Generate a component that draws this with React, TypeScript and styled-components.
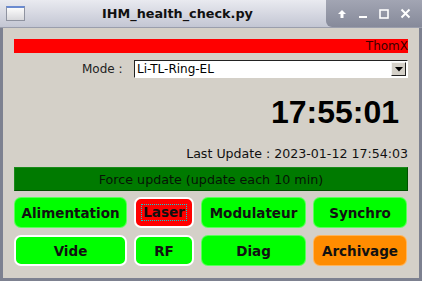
import React from 'react';
import styled, { createGlobalStyle } from 'styled-components';

const GlobalStyle = createGlobalStyle`
  html, body {
    margin: 0;
    padding: 0;
    background: #d4d0c8;
  }
`;

const Window = styled.div`
  width: 422px;
  height: 281px;
  display: flex;
  flex-direction: column;
  font-family: 'DejaVu Sans', sans-serif;
  overflow: hidden;
`;

const TitleBar = styled.div`
  height: 28px;
  display: flex;
  align-items: center;
  background: linear-gradient(#e9eaf0, #c3c6d3);
  border-bottom: 1px solid #9a9eac;
  box-sizing: border-box;
`;

const AppIcon = styled.div`
  width: 19px;
  height: 15px;
  margin-left: 6px;
  border: 1px solid #8f93a0;
  border-top: 2px solid #6a8ad0;
  background: linear-gradient(#fbfbfb, #d8d8dc);
  box-sizing: border-box;
`;

const Title = styled.div`
  flex: 1;
  text-align: center;
  font-weight: bold;
  font-size: 12.8px;
  color: #111;
  padding-left: 4px;
`;

const Controls = styled.div`
  width: 96px;
  height: 27px;
  display: flex;
  align-items: center;
  justify-content: space-around;
  padding: 0 6px;
  box-sizing: border-box;
  background: linear-gradient(#a2a5b3, #868a9a);
  border-bottom-left-radius: 6px;
  align-self: flex-start;
  color: #fff;
`;

const Body = styled.div`
  flex: 1;
  display: flex;
  flex-direction: column;
  padding: 11px 11px 0 11px;
  border: 3px solid #7d8190;
  border-top: none;
  background: #d4d0c8;
`;

const Banner = styled.div`
  height: 14px;
  background: #ff0000;
  color: #3a0000;
  font-size: 12px;
  line-height: 14px;
  text-align: right;
`;

const ModeRow = styled.div`
  display: flex;
  align-items: center;
  margin-top: 7px;
  height: 18px;
`;

const Label = styled.span`
  font-size: 12px;
  color: #222;
  margin-left: 68px;
  width: 52px;
`;

const Combo = styled.div`
  flex: 1;
  height: 18px;
  box-sizing: border-box;
  display: flex;
  align-items: center;
  background: #fff;
  border: 1px solid #fff;
  border-top-color: #222;
  border-left-color: #222;
  font-size: 12px;
  color: #000;
  padding-left: 2px;
`;

const ComboText = styled.span`
  flex: 1;
`;

const ComboArrow = styled.div`
  width: 15px;
  height: 14px;
  margin-right: 1px;
  box-sizing: border-box;
  background: #d4d0c8;
  border: 1px solid #222;
  border-top-color: #f4f4f4;
  border-left-color: #f4f4f4;
  display: flex;
  align-items: center;
  justify-content: center;
`;

const Clock = styled.div`
  font-family: 'Liberation Sans', Arial, sans-serif;
  font-weight: bold;
  font-size: 32px;
  color: #000;
  text-align: right;
  padding-right: 9px;
  margin-top: 16px;
  line-height: 36px;
`;

const LastUpdate = styled.div`
  font-size: 12.6px;
  color: #111;
  text-align: right;
  margin-top: 17px;
  line-height: 14px;
`;

const ForceBar = styled.div`
  margin-top: 6px;
  height: 24px;
  box-sizing: border-box;
  background: #007a00;
  border: 1px solid #005000;
  border-top-color: #1a8a1a;
  border-left-color: #1a8a1a;
  font-size: 12.7px;
  color: #061406;
  display: flex;
  align-items: center;
  justify-content: center;
`;

const Grid = styled.div`
  display: grid;
  grid-template-columns: 113px 60px 105px 94px;
  column-gap: 7px;
  row-gap: 7px;
  margin-top: 6px;
`;

const StatusButton = styled.div<{ $color: string; $ring?: boolean }>`
  height: 31px;
  box-sizing: border-box;
  border-radius: 7px;
  background: ${(p) => p.$color};
  border: ${(p) => (p.$ring ? '2px solid #ffffff' : '1px solid rgba(255,255,255,0.35)')};
  display: flex;
  align-items: center;
  justify-content: center;
  font-weight: bold;
  font-size: 13.5px;
  color: #111;
`;

const Focus = styled.span`
  outline: 1px dotted #00d8d8;
  padding: 0 1px;
  line-height: 15px;
`;

const buttons = [
  { label: 'Alimentation', color: '#00ff00' },
  { label: 'Laser', color: '#ff0000', ring: true, focus: true },
  { label: 'Modulateur', color: '#00ff00' },
  { label: 'Synchro', color: '#00ff00' },
  { label: 'Vide', color: '#00ff00', ring: true },
  { label: 'RF', color: '#00ff00', ring: true },
  { label: 'Diag', color: '#00ff00' },
  { label: 'Archivage', color: '#ff8c00' },
];

export default function App() {
  return (
    <>
      <GlobalStyle />
      <Window>
        <TitleBar>
          <AppIcon />
          <Title>IHM_health_check.py</Title>
          <Controls>
            <svg width="10" height="10" viewBox="0 0 10 10">
              <path d="M5 1 L9 5 L6.5 5 L6.5 9 L3.5 9 L3.5 5 L1 5 Z" fill="#fff" />
            </svg>
            <svg width="10" height="10" viewBox="0 0 10 10">
              <rect x="1" y="7" width="8" height="2" fill="#fff" />
            </svg>
            <svg width="10" height="10" viewBox="0 0 10 10">
              <rect x="1" y="1" width="8" height="8" fill="none" stroke="#fff" strokeWidth="1.6" />
            </svg>
            <svg width="11" height="11" viewBox="0 0 11 11">
              <path d="M1.5 1.5 L9.5 9.5 M9.5 1.5 L1.5 9.5" stroke="#fff" strokeWidth="2" />
            </svg>
          </Controls>
        </TitleBar>
        <Body>
          <Banner>ThomX</Banner>
          <ModeRow>
            <Label>Mode :</Label>
            <Combo>
              <ComboText>Li-TL-Ring-EL</ComboText>
              <ComboArrow>
                <svg width="8" height="5" viewBox="0 0 8 5">
                  <path d="M0 0 L8 0 L4 4.5 Z" fill="#000" />
                </svg>
              </ComboArrow>
            </Combo>
          </ModeRow>
          <Clock>17:55:01</Clock>
          <LastUpdate>Last Update : 2023-01-12 17:54:03</LastUpdate>
          <ForceBar>Force update (update each 10 min)</ForceBar>
          <Grid>
            {buttons.map((b) => (
              <StatusButton key={b.label} $color={b.color} $ring={b.ring}>
                {b.focus ? <Focus>{b.label}</Focus> : b.label}
              </StatusButton>
            ))}
          </Grid>
        </Body>
      </Window>
    </>
  );
}
